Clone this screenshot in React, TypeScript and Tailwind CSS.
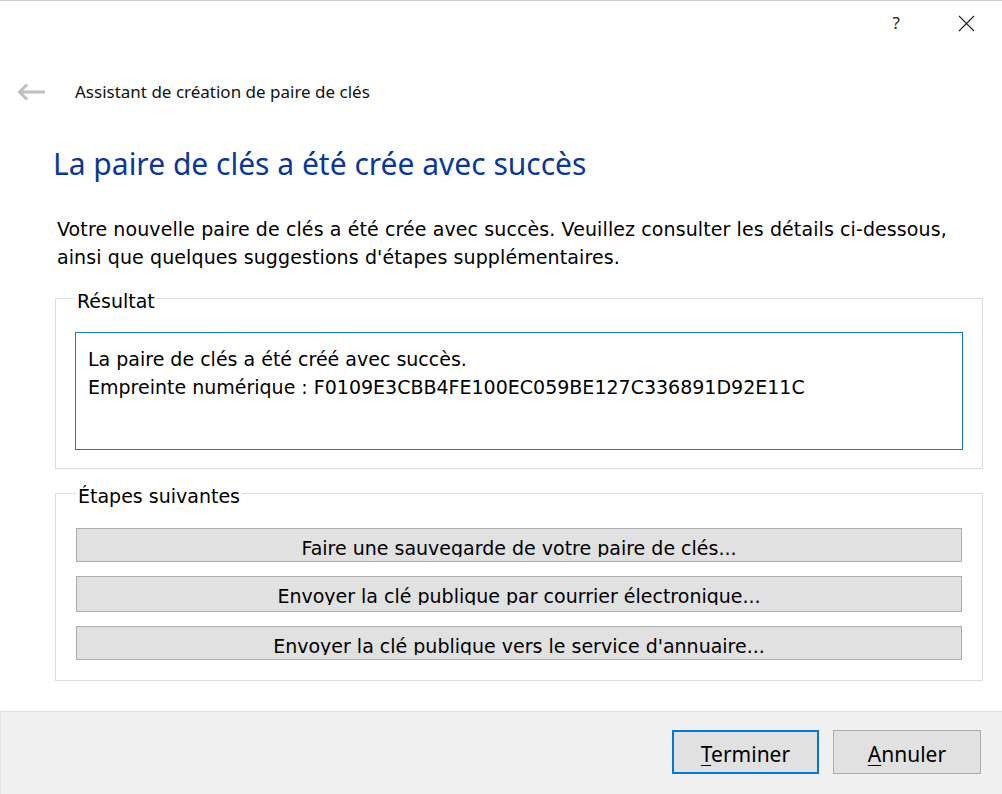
import React from "react";

const tahoma = { fontFamily: '"DejaVu Sans", Verdana, sans-serif' };

function StepButton({ label, h }: { label: string; h: string }) {
  return (
    <div className={`${h} w-full border border-[#adadad] bg-[#e1e1e1] overflow-hidden`}>
      <div className="h-[28px] overflow-hidden">
        <div className="pt-[10px] text-center text-[19px] leading-none text-black" style={tahoma}>
          {label}
        </div>
      </div>
    </div>
  );
}

export default function App() {
  return (
    <div className="w-[1002px] h-[794px] bg-white flex flex-col border-t border-[#cccccc] overflow-hidden font-['Open_Sans',sans-serif]">
      {/* title bar */}
      <div className="h-[45px] flex items-center justify-end pr-[27px] gap-[58px] shrink-0">
        <span className="text-[17px] text-[#222] font-['Noto_Sans',sans-serif] leading-none -mt-[2px]">?</span>
        <svg width="17" height="17" viewBox="0 0 17 17" className="-mt-[1px]">
          <path d="M1 1 L16 16 M16 1 L1 16" stroke="#222" strokeWidth="1.1" fill="none" />
        </svg>
      </div>

      {/* header */}
      <div className="flex items-center h-[30px] mt-[31px] shrink-0">
        <svg width="30" height="20" viewBox="0 0 30 20" className="ml-[16px]">
          <path d="M29 10 H3.5 M11 2.5 L3.5 10 L11 17.5" stroke="#bfbfbf" strokeWidth="3" fill="none" strokeLinejoin="miter" />
        </svg>
        <span className="ml-[29px] text-[17px] text-[#111] font-['Noto_Sans',sans-serif]">
          Assistant de création de paire de clés
        </span>
      </div>

      {/* main title */}
      <div className="mt-[37px] pl-[53px] text-[30px] leading-[40px] text-[#0b3796] font-['Noto_Sans',sans-serif] shrink-0">
        La paire de clés a été crée avec succès
      </div>

      {/* intro */}
      <div
        className="mt-[31px] pl-[57px] pr-[20px] text-[19px] leading-[28px] text-black tracking-[0.1px] shrink-0"
        style={tahoma}
      >
        Votre nouvelle paire de clés a été crée avec succès. Veuillez consulter les détails ci-dessous,
        <br />
        ainsi que quelques suggestions d'étapes supplémentaires.
      </div>

      {/* Résultat group */}
      <fieldset className="mt-[14px] mx-[55px] w-[928px] border border-[#dcdcdc] px-[19px] pb-[18px] shrink-0" style={tahoma}>
        <legend className="px-[2px] pt-[6px] text-[19px] leading-[20px] text-black -mb-[2px]">Résultat</legend>
        <div className="mt-[23px] h-[118px] border border-[#1979ca] px-[12px] pt-[12px] text-[19px] leading-[28px] text-black">
          La paire de clés a été créé avec succès.
          <br />
          Empreinte numérique : F0109E3CBB4FE100EC059BE127C336891D92E11C
        </div>
      </fieldset>

      {/* Étapes suivantes group */}
      <fieldset className="mt-[11px] mx-[55px] w-[928px] border border-[#dcdcdc] px-[20px] pb-[20px] shrink-0" style={tahoma}>
        <legend className="px-[2px] pt-[6px] text-[19px] leading-[20px] text-black">Étapes suivantes</legend>
        <div className="mt-[22px] flex flex-col gap-[14px]">
          <StepButton label="Faire une sauvegarde de votre paire de clés..." h="h-[34px]" />
          <StepButton label="Envoyer la clé publique par courrier électronique..." h="h-[36px]" />
          <StepButton label="Envoyer la clé publique vers le service d'annuaire..." h="h-[34px]" />
        </div>
      </fieldset>

      <div className="flex-1" />

      {/* footer */}
      <div className="h-[83px] shrink-0 bg-[#f0f0f0] border-t border-[#dedede] border-l border-l-[#e4e4e4] flex items-start justify-end pr-[21px] pt-[18px] gap-[14px]">
        <div className="w-[147px] h-[44px] border-2 border-[#0078d7] bg-[#e1e1e1] flex items-center justify-center pt-[6px] text-[21px] text-black font-['Noto_Sans',sans-serif]">
          <span><span className="underline underline-offset-[3px] decoration-1">T</span>erminer</span>
        </div>
        <div className="w-[148px] h-[44px] border border-[#adadad] bg-[#e1e1e1] flex items-center justify-center pt-[6px] text-[21px] text-black font-['Noto_Sans',sans-serif]">
          <span><span className="underline underline-offset-[3px] decoration-1">A</span>nnuler</span>
        </div>
      </div>
    </div>
  );
}
